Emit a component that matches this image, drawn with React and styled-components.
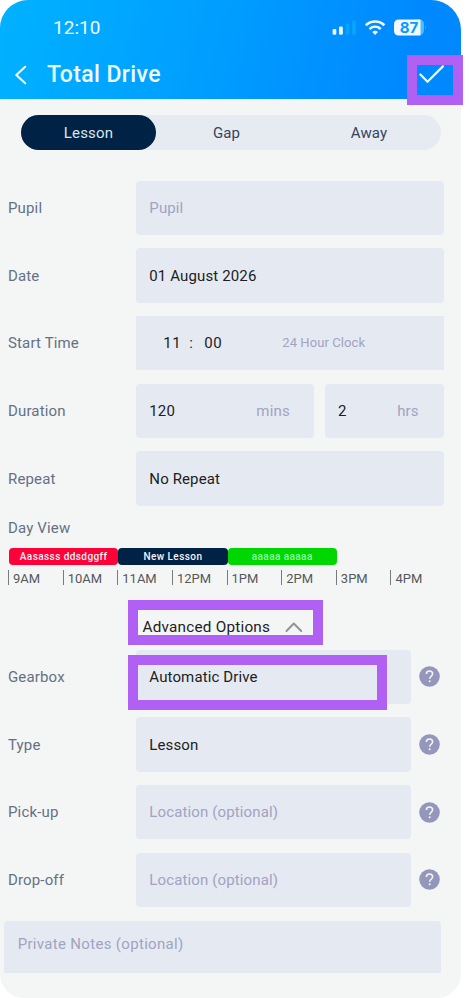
import React from "react";
import styled, { createGlobalStyle } from "styled-components";

const GlobalStyle = createGlobalStyle`
  * { box-sizing: border-box; }
  body { margin: 0; background: #fff; font-family: Roboto, "Liberation Sans", sans-serif; }
`;

const Screen = styled.main`
  position: relative;
  width: 461px;
  height: 998px;
  border-radius: 30px 30px 24px 24px;
  background: #f4f6f6;
  color: #1d2023;
  font-size: 15px;
  line-height: 20px;
  white-space: nowrap;
`;

const Header = styled.header`
  height: 99px;
  border-radius: 28px 30px 0 0;
  background: linear-gradient(105deg, #00b2ff 0%, #009dff 48%, #0088ff 88%);
  color: #effbff;
`;

const StatusBar = styled.div`
  display: flex;
  align-items: center;
  height: 55px;
  padding: 0 35px 0 53px;
`;

const Clock = styled.span`
  flex: 1;
  font-size: 19px;
  letter-spacing: 0.05px;
`;

const StatusIcons = styled.svg`
  display: block;
  width: 96px;
  height: 20px;
`;

const BatteryText = styled.text`
  font: 700 15px Inter, sans-serif;
  fill: #079bff;
`;

const TitleBar = styled.div`
  display: flex;
  align-items: center;
  height: 40px;
  padding-left: 14px;
`;

const Title = styled.h1`
  flex: 1;
  margin: 0 0 0 18px;
  font-size: 23px;
  line-height: 40px;
  font-weight: 500;
  letter-spacing: 0.38px;
`;

const LineIcon = styled.svg`
  display: block;
  fill: none;
  stroke: currentColor;
  stroke-linecap: round;
  stroke-linejoin: round;
`;

const Check = styled(LineIcon)`
  margin-right: 16px;
`;

const Tabs = styled.nav`
  display: flex;
  width: 420px;
  height: 35.5px;
  margin: 15.5px 0 0 21px;
  border-radius: 18px;
  background: #e6ebf2;
`;

const Tab = styled.div`
  flex: 0 0 ${(p) => p.$width}px;
  border-radius: 18px;
  line-height: 36px;
  text-align: center;
  letter-spacing: 0.15px;
  color: ${(p) => (p.$active ? "#dbe5ef" : "#34445f")};
  background: ${(p) => (p.$active ? "#002245" : "transparent")};
`;

const Form = styled.section`
  display: grid;
  row-gap: 13.4px;
  margin-top: ${(p) => p.$top}px;
`;

const Row = styled.div`
  display: grid;
  grid-template-columns: 128.3px ${(p) => (p.$help ? "274.4px" : "307.3px")} auto;
  align-items: center;
  height: 54.3px;
  padding-left: 8px;
`;

const Label = styled.span`
  color: #667085;
  letter-spacing: 0.15px;
`;

const Field = styled.div`
  display: flex;
  align-items: center;
  height: 54.3px;
  padding: 0 ${(p) => p.$right || 13}px 0 13px;
  border-radius: ${(p) => (p.$square ? 0 : 4)}px;
  background: #e5eaf2;
  color: ${(p) => (p.$placeholder ? "#a0a3c2" : "#1d2023")};
  letter-spacing: 0.13px;
`;

const Split = styled.div`
  display: grid;
  grid-template-columns: 177.5px 118.6px;
  column-gap: 11.3px;
`;

const Unit = styled.span`
  margin-left: auto;
  color: #a0a3c2;
  letter-spacing: 0.15px;
`;

const TimePart = styled.span`
  width: ${(p) => p.$width}px;
  margin-left: ${(p) => p.$left || 0}px;
  letter-spacing: 0.5px;
`;

const ClockHint = styled.span`
  color: #a0a3c2;
  font-size: 13px;
  letter-spacing: 0.08px;
`;

const DayView = styled.section`
  margin-top: 12.4px;
  padding-left: 8px;
`;

const Events = styled.div`
  display: grid;
  grid-template-columns: repeat(3, 109.3px);
  height: 17px;
  margin: 9.6px 0 0 1px;
`;

const Event = styled.div`
  border-radius: 4px;
  background: ${(p) => p.$color};
  color: ${(p) => p.$ink || "#f3f4f8"};
  font-size: 10px;
  font-weight: 500;
  line-height: 17.5px;
  text-align: center;
  letter-spacing: ${(p) => p.$spacing}px;
`;

const Hours = styled.div`
  display: grid;
  grid-template-columns: repeat(8, 54.65px);
  margin-top: 5px;
`;

const Hour = styled.span`
  height: 15px;
  padding-left: 4px;
  border-left: 1.5px solid #777b7e;
  color: #55585b;
  font-size: 13px;
  line-height: 17px;
`;

const Advanced = styled.div`
  display: flex;
  align-items: center;
  gap: 14.5px;
  width: 195px;
  height: 45px;
  margin: 15px 0 0 128px;
  padding: 9.5px 0 0 14.5px;
  font-size: 15.3px;
  letter-spacing: 0.22px;

  svg { color: #919496; }
`;

const Help = styled.svg`
  display: block;
  width: 21px;
  height: 21px;
  margin-left: 8.7px;
`;

const Notes = styled.div`
  width: 437px;
  height: 52.7px;
  margin: 13.5px 0 0 4.4px;
  padding: 13.3px;
  border-radius: 4px 4px 0 0;
  background: #e5eaf2;
  color: #a0a3c2;
  letter-spacing: 0.32px;
`;

const Highlight = styled.div`
  position: absolute;
  left: ${(p) => p.$x}px;
  top: ${(p) => p.$y}px;
  width: ${(p) => p.$w}px;
  height: ${(p) => p.$h}px;
  border: 10px solid #b060f2;
  pointer-events: none;
`;

const hours = ["9AM", "10AM", "11AM", "12PM", "1PM", "2PM", "3PM", "4PM"];

const options = [
  { label: "Gearbox", value: "Automatic Drive" },
  { label: "Type", value: "Lesson" },
  { label: "Pick-up", value: "Location (optional)", placeholder: true },
  { label: "Drop-off", value: "Location (optional)", placeholder: true },
];

function HelpIcon() {
  return (
    <Help viewBox="0 0 21 21">
      <circle cx="10.5" cy="10.5" r="10.3" fill="#9497bb" />
      <path d="M7.4 8.1C7.4 6.3 8.7 5 10.5 5s3.1 1.2 3.1 2.8c0 2.4-2.9 2.5-2.9 5" fill="none" stroke="#f4f6f6" strokeWidth="1.6" />
      <circle cx="10.7" cy="15.3" r="1" fill="#f4f6f6" />
    </Help>
  );
}

export default function App() {
  return (
    <>
      <GlobalStyle />
      <Screen>
        <Header>
          <StatusBar>
            <Clock>12:10</Clock>
            <StatusIcons viewBox="0 0 96 20">
              <rect x="2.6" y="11" width="3.7" height="5.8" rx="1.3" fill="#effaff" />
              <rect x="9" y="8.5" width="3.8" height="8.3" rx="1.3" fill="#effaff" />
              <rect x="15.8" y="5.6" width="3.5" height="11.2" rx="1.2" fill="#08a6ff" />
              <rect x="22.2" y="2.5" width="3.6" height="14.3" rx="1.2" fill="#08a6ff" />
              <g fill="none" stroke="#effaff" strokeWidth="2.6">
                <path d="M35.8 7.2c5.2-5 13.4-5 18.6 0" />
                <path d="M39.5 10.9c3.3-2.8 7.9-2.8 11.2 0" />
              </g>
              <path d="M42.2 13.9q2.9-2.1 5.8 0L45.1 17z" fill="#effaff" />
              <path d="M85 1.5h4q5 0 5 5v5.5q0 5-5 5h-4z" fill="#4fbbff" />
              <path d="M69 1.5h21.5v16H69q-5 0-5-5v-6q0-5 5-5z" fill="#f1f9ff" />
              <path d="M95 7q1.8 2.3 0 4.6z" fill="#35adff" />
              <BatteryText x="69.8" y="14.7">87</BatteryText>
            </StatusIcons>
          </StatusBar>
          <TitleBar>
            <LineIcon width="15" height="22" viewBox="0 0 15 22" strokeWidth="2.2">
              <path d="M11.2 2.8 2.3 11l8.9 8.2" />
            </LineIcon>
            <Title>Total Drive</Title>
            <Check width="26" height="20" viewBox="0 0 26 20" strokeWidth="2.2">
              <path d="M1.4 9.5 8.5 16.8 23.9 1.4" />
            </Check>
          </TitleBar>
        </Header>

        <Tabs>
          <Tab $active $width={135}>Lesson</Tab>
          <Tab $width={141}>Gap</Tab>
          <Tab $width={144}>Away</Tab>
        </Tabs>

        <Form $top={30.7}>
          <Row><Label>Pupil</Label><Field $placeholder>Pupil</Field></Row>
          <Row><Label>Date</Label><Field>01 August 2026</Field></Row>
          <Row>
            <Label>Start Time</Label>
            <Field $square>
              <TimePart $left={14} $width={26}>11</TimePart>
              <TimePart $width={15}>:</TimePart>
              <TimePart $width={78}>00</TimePart>
              <ClockHint>24 Hour Clock</ClockHint>
            </Field>
          </Row>
          <Row>
            <Label>Duration</Label>
            <Split>
              <Field $right={24}>120<Unit>mins</Unit></Field>
              <Field $right={25}>2<Unit>hrs</Unit></Field>
            </Split>
          </Row>
          <Row><Label>Repeat</Label><Field>No Repeat</Field></Row>
        </Form>

        <DayView>
          <Label>Day View</Label>
          <Events>
            <Event $color="#ff0038" $spacing={0.42}>Aasasss ddsdggff</Event>
            <Event $color="#002245" $spacing={0.42}>New Lesson</Event>
            <Event $color="#00d600" $ink="#8fffa4" $spacing={0.42}>aaaaa aaaaa</Event>
          </Events>
          <Hours>{hours.map((hour) => <Hour key={hour}>{hour}</Hour>)}</Hours>
        </DayView>

        <Advanced>
          Advanced Options
          <LineIcon width="18" height="12" viewBox="0 0 18 12" strokeWidth="2">
            <path d="m1.5 10 7.3-7.5L16.2 10" />
          </LineIcon>
        </Advanced>

        <Form $top={5}>
          {options.map((option) => (
            <Row key={option.label} $help>
              <Label>{option.label}</Label>
              <Field $placeholder={option.placeholder}>{option.value}</Field>
              <HelpIcon />
            </Row>
          ))}
        </Form>
        <Notes>Private Notes (optional)</Notes>

        <Highlight $x={406.5} $y={55} $w={56.8} $h={50} />
        <Highlight $x={128.3} $y={600} $w={195} $h={44.5} />
        <Highlight $x={128.3} $y={655} $w={258.5} $h={55} />
      </Screen>
    </>
  );
}
